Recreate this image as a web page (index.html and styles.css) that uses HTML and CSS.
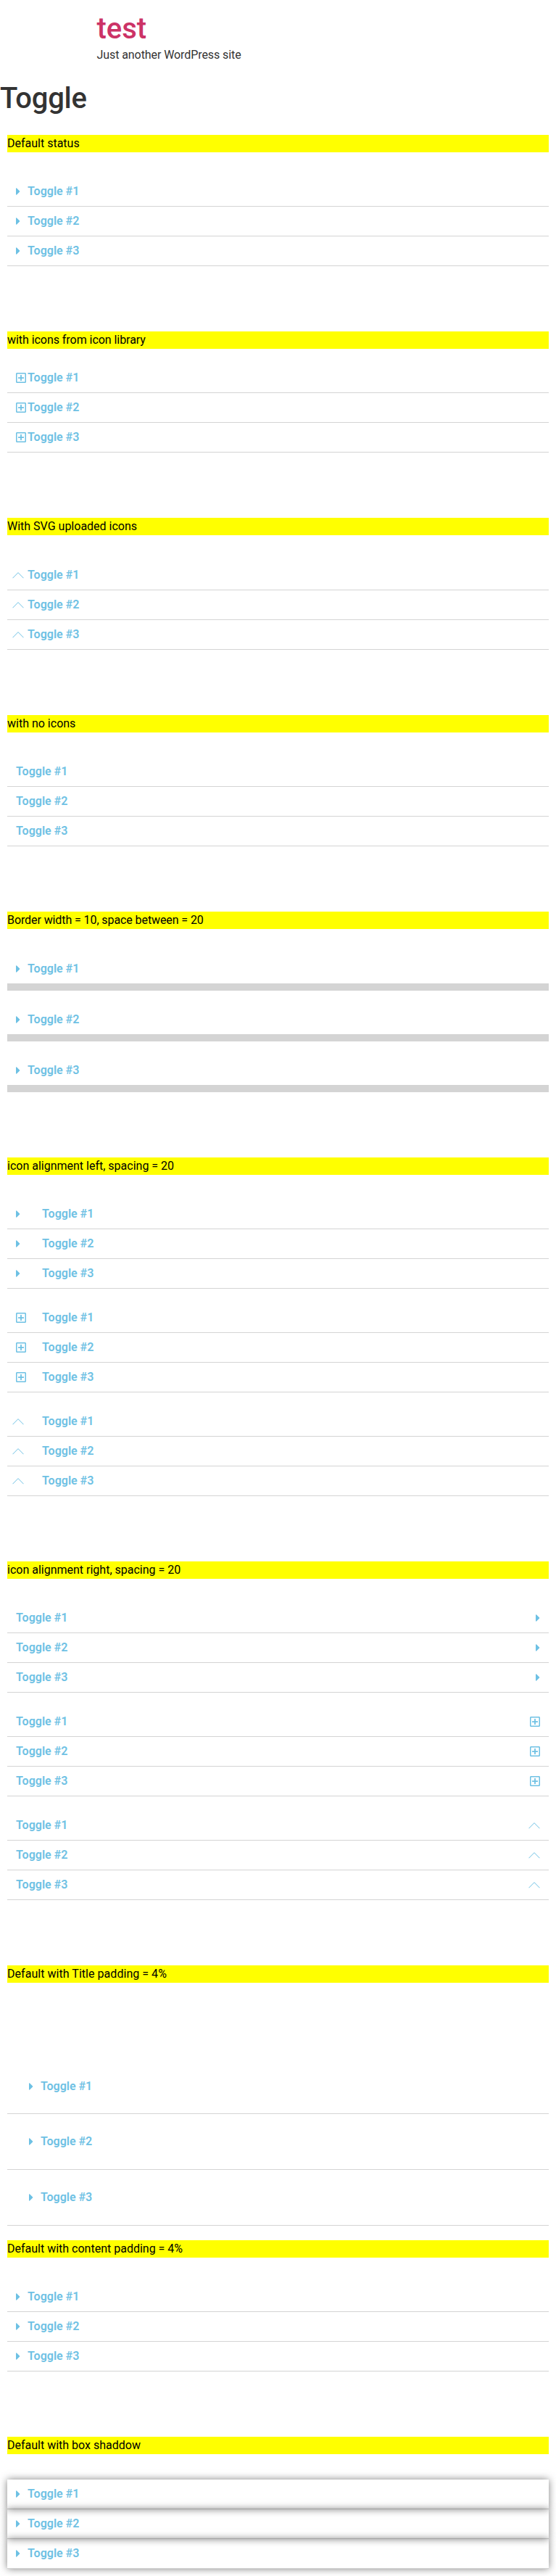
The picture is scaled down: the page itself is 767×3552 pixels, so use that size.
FILE: index.html
```html
<!DOCTYPE html>
<html lang="en">
<head>
<meta charset="utf-8">
<title>Toggle – test</title>
<link rel="stylesheet" href="styles.css">
</head>
<body>
<svg class="sprite" aria-hidden="true">
  <symbol id="caret" viewBox="0 0 192 512"><path d="M0 384.662V127.338c0-17.818 21.543-26.741 34.142-14.142l128.657 128.657c7.81 7.81 7.81 20.474 0 28.284L34.142 398.804C21.543 411.404 0 402.48 0 384.662z"/></symbol>
  <symbol id="plus" viewBox="0 0 448 512"><path d="M352 240v32c0 6.6-5.4 12-12 12h-88v88c0 6.6-5.4 12-12 12h-32c-6.6 0-12-5.4-12-12v-88h-88c-6.6 0-12-5.4-12-12v-32c0-6.600 5.400-12 12-12h88v-88c0-6.600 5.400-12 12-12h32c6.600 0 12 5.400 12 12v88h88c6.600 0 12 5.400 12 12zm96-160v352c0 26.500-21.500 48-48 48H48c-26.500 0-48-21.500-48-48V80c0-26.500 21.500-48 48-48h352c26.500 0 48 21.500 48 48zm-48 346V86c0-3.300-2.700-6-6-6H54c-3.300 0-6 2.700-6 6v340c0 3.300 2.700 6 6 6h340c3.300 0 6-2.700 6-6z"/></symbol>
  <symbol id="chevron" viewBox="0 0 16 16"><path d="M.5 12.200 8 4.600l7.500 7.600" fill="none" stroke="currentColor" stroke-width="1"/></symbol>
</svg>
<header class="site-header">
  <h1 class="site-title">test</h1>
  <p class="site-tagline">Just another WordPress site</p>
</header>
<main>
  <h1 class="page-title">Toggle</h1>
  <div class="content" id="content"></div>
</main>
<script src="toggles.js"></script>
</body>
</html>
```
FILE: styles.css
```css
* { box-sizing: border-box; }
body {
  margin: 0;
  background: #fff;
  color: #333;
  font: 400 16px/1.5 Roboto, sans-serif;
}
.sprite { display: none; }
.site-header {
  width: 500px;
  margin: 0 auto;
  padding: 16px 0;
}
.site-title, .page-title {
  margin: 0;
  font-size: 40px;
  font-weight: 500;
  line-height: 1.2;
}
.site-title { color: #c36; }
.site-tagline { margin: 0; letter-spacing: -.08px; }
.page-title { margin: 8px 0 16px; letter-spacing: -.3px; }
.content { padding: 10px; }
.section { margin-bottom: 90px; }
.section:last-child { margin-bottom: 0; }
.label {
  margin: 0 0 34px;
  background: #ff0;
  color: #000;
}
.near .label { margin-bottom: 20px; letter-spacing: -.05px; }
.low .label { margin-bottom: 35px; }
.wide .label { letter-spacing: -.09px; }
.padded .label { margin-bottom: 104.7px; letter-spacing: .04px; }
.padded { margin-bottom: 20.020px; }
.toggle + .toggle { margin-top: 20px; }
.item-title {
  display: flex;
  padding: 12px;
  border-bottom: 1px solid #d4d4d4;
  color: #6ec1e4;
  font-weight: 600;
  line-height: 1;
}
.icon {
  display: flex;
  width: 16px;
  height: 16px;
}
.icon svg {
  display: block;
  flex: none;
  height: 16px;
  fill: currentColor;
}
.caret { width: 6px; }
.plus { width: 14px; }
.chevron { width: 16px; margin-left: -5px; }
.spaced .icon { margin-right: 20px; }
.right .item-title { flex-direction: row-reverse; justify-content: space-between; }
.right .icon { justify-content: flex-end; }
.wide .item-title { border-bottom-width: 10px; }
.wide .item + .item { margin-top: 20px; }
.padded .item-title { padding: 4%; }
.shadow .item { box-shadow: 0 0 10px rgba(0, 0, 0, .5); }
```
FILE: toggles.js
```js
const sections = [
  ["Default status", "", ["caret"]],
  ["with icons from icon library", "near", ["plus"]],
  ["With SVG uploaded icons", "low", ["chevron"]],
  ["with no icons", "", [""]],
  ["Border width = 10, space between = 20", "wide low", ["caret"]],
  ["icon alignment left, spacing = 20", "spaced", ["caret", "plus", "chevron"]],
  ["icon alignment right, spacing = 20", "right", ["caret", "plus", "chevron"]],
  ["Default with Title padding = 4%", "padded", ["caret"]],
  ["Default with content padding = 4%", "", ["caret"]],
  ["Default with box shaddow", "shadow low", ["caret"]]
];

const iconMarkup = name => name
  ? `<span class="icon"><svg class="${name}"><use href="#${name}"/></svg></span>`
  : "";

const toggleMarkup = icon => `<div class="toggle">${[1, 2, 3].map(n =>
  `<div class="item"><div class="item-title">${iconMarkup(icon)}<span>Toggle #${n}</span></div></div>`
).join("")}</div>`;

document.getElementById("content").innerHTML = sections.map(([label, variant, icons]) =>
  `<section class="section ${variant}"><p class="label">${label}</p>${icons.map(toggleMarkup).join("")}</section>`
).join("");
```
